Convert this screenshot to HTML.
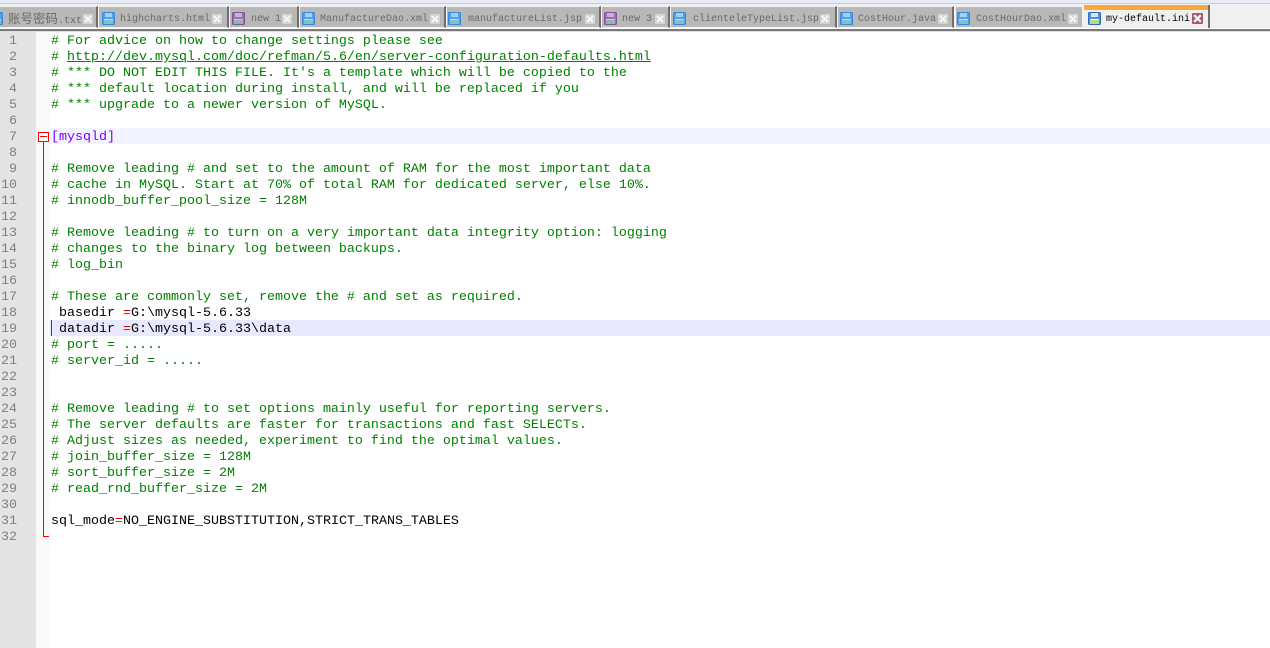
<!DOCTYPE html>
<html><head><meta charset="utf-8">
<style>
html,body{margin:0;padding:0;width:1270px;height:648px;overflow:hidden;background:#fff}
body{position:relative;font-family:"Liberation Mono","Noto Sans CJK SC",monospace}
.abs{position:absolute}
#bar{left:0;top:0;width:1270px;height:29px;background:#f0f0f0}
#bar:before{content:"";position:absolute;left:0;right:0;top:0;height:3px;background:#e8ecf6;border-bottom:1px solid #c4cce0}
#rule{left:0;top:28px;width:1270px;height:4px;background:linear-gradient(#fff 0,#fff 1px,#7a7a7a 1px,#7a7a7a 3px,#ddd 3px)}
.tab{position:absolute;top:6px;height:22px;background:#b8b8b8;border:1px solid #f4f4f4;border-right:2px solid #6e6e6e;box-sizing:border-box;color:#6a6a6a;font-size:10px;line-height:24px;white-space:pre;overflow:visible}
.tab span.t{position:absolute;top:1px;height:24px;line-height:24px}
.tab svg{position:absolute;top:5px;left:6px;width:13px;height:13px}
.x{position:absolute;top:7px;width:10px;height:10px;background:#d4d4d4;border-radius:1px}
.x svg{position:absolute!important;left:0!important;top:0!important;width:100%!important;height:100%!important}
.act{background:#f0f0f0;color:#000;top:5px;height:24px;border:0;border-right:2px solid #6e6e6e}
.act:before{content:"";position:absolute;left:0;right:0;top:0;height:5px;background:#fba73a}
#gut{left:0;top:32px;width:36px;height:616px;background:#e4e4e4}
#fold{left:36px;top:32px;width:14px;height:616px;background-color:#f3f3f3;background-image:linear-gradient(45deg,#fff 25%,transparent 25%,transparent 75%,#fff 75%),linear-gradient(45deg,#fff 25%,transparent 25%,transparent 75%,#fff 75%);background-size:2px 2px;background-position:0 0,1px 1px}
.n{position:absolute;left:0;width:17px;text-align:right;color:#808080;font-size:13.33px;line-height:16px;height:16px;margin-top:2px}
.l{position:absolute;left:51px;font-size:13.33px;line-height:16px;height:16px;white-space:pre;color:#000;margin-top:2px}
.c{color:#008000}
.h{color:#8000ff}
.e{color:#e00000}
.u{text-decoration:underline}
</style></head><body>
<div class="abs" id="bar"></div>

<svg width="0" height="0" style="position:absolute"><defs>
<g id="fb"><rect x="0.5" y="0.5" width="12" height="12" rx="1" fill="#4f9ff0" stroke="#3a86dc"/><rect x="3" y="1" width="7" height="4" fill="#a8cdf2"/><rect x="2" y="7" width="9" height="5" fill="#7fc4c4"/><rect x="2" y="7" width="9" height="1" fill="#c4dcf0"/></g>
<g id="fp"><rect x="0.5" y="0.5" width="12" height="12" rx="1" fill="#9a6fb0" stroke="#7f5498"/><rect x="3" y="1" width="7" height="4" fill="#c8b0d8"/><rect x="2" y="7" width="9" height="5" fill="#8fb8a8"/><rect x="2" y="7" width="9" height="1" fill="#d4c8e0"/></g>
<g id="fa"><rect x="0.5" y="0.5" width="12" height="12" rx="1" fill="#4d8fd8" stroke="#2f6cb8"/><rect x="3" y="1" width="7" height="4" fill="#d4e6f8"/><rect x="2" y="7" width="9" height="5" fill="#b4dc88"/><rect x="2" y="7" width="9" height="1" fill="#f0f6e4"/></g>
<path id="xx" d="M2 2L8 8M8 2L2 8" stroke="#f6f6f6" stroke-width="2" fill="none"/>
</defs></svg>

<div class="tab" style="left:-14px;width:112px">
<svg viewBox="0 0 13 13" style="left:3px"><use href="#fb"/></svg><span class="t" style="left:21px;font-size:12.5px">账号密码<span style="font-size:10px">.txt</span></span><div class="x" style="left:96px"><svg viewBox="0 0 10 10"><use href="#xx"/></svg></div></div>

<div class="tab" style="left:98px;width:131px"><svg viewBox="0 0 13 13" style="left:3px"><use href="#fb"/></svg><span class="t" style="left:21px">highcharts.html</span><div class="x" style="left:113px"><svg viewBox="0 0 10 10"><use href="#xx"/></svg></div></div>

<div class="tab" style="left:229px;width:70px"><svg viewBox="0 0 13 13" style="left:2px"><use href="#fp"/></svg><span class="t" style="left:21px">new 1</span><div class="x" style="left:52px"><svg viewBox="0 0 10 10"><use href="#xx"/></svg></div></div>

<div class="tab" style="left:299px;width:147px"><svg viewBox="0 0 13 13" style="left:2px"><use href="#fb"/></svg><span class="t" style="left:20px">ManufactureDao.xml</span><div class="x" style="left:130px"><svg viewBox="0 0 10 10"><use href="#xx"/></svg></div></div>

<div class="tab" style="left:446px;width:155px"><svg viewBox="0 0 13 13" style="left:1px"><use href="#fb"/></svg><span class="t" style="left:21px">manufactureList.jsp</span><div class="x" style="left:138px"><svg viewBox="0 0 10 10"><use href="#xx"/></svg></div></div>

<div class="tab" style="left:601px;width:69px"><svg viewBox="0 0 13 13" style="left:2px"><use href="#fp"/></svg><span class="t" style="left:20px">new 3</span><div class="x" style="left:53px"><svg viewBox="0 0 10 10"><use href="#xx"/></svg></div></div>

<div class="tab" style="left:670px;width:167px"><svg viewBox="0 0 13 13" style="left:2px"><use href="#fb"/></svg><span class="t" style="left:22px">clienteleTypeList.jsp</span><div class="x" style="left:149px"><svg viewBox="0 0 10 10"><use href="#xx"/></svg></div></div>

<div class="tab" style="left:837px;width:117px"><svg viewBox="0 0 13 13" style="left:2px"><use href="#fb"/></svg><span class="t" style="left:20px">CostHour.java</span><div class="x" style="left:100px"><svg viewBox="0 0 10 10"><use href="#xx"/></svg></div></div>

<div class="tab" style="left:955px;width:128px;border-right:1px solid #f4f4f4"><svg viewBox="0 0 13 13" style="left:1px"><use href="#fb"/></svg><span class="t" style="left:20px">CostHourDao.xml</span><div class="x" style="left:112px"><svg viewBox="0 0 10 10"><use href="#xx"/></svg></div></div>

<div class="tab act" style="left:1084px;width:126px"><svg viewBox="0 0 13 13" style="left:4px;top:7px"><use href="#fa"/></svg><span class="t" style="left:22px;top:3px">my-default.ini</span><div class="x" style="left:108px;top:8px;width:11px;height:11px;background:#a85a70"><svg viewBox="0 0 10 10"><use href="#xx"/></svg></div></div>

<div class="abs" id="rule"></div>
<div class="abs" id="gut"></div>
<div class="abs" id="fold"></div>

<div class="abs" style="left:50px;top:128px;width:1220px;height:16px;background:#f2f4ff"></div>
<div class="abs" style="left:50px;top:320px;width:1220px;height:16px;background:#e8e8ff"></div>
<div class="abs" style="left:51px;top:320px;width:1px;height:16px;background:#6020c0"></div>

<div class="abs" style="left:43px;top:141px;width:1px;height:396px;background:#ff0000"></div>
<div class="abs" style="left:43px;top:536px;width:6px;height:1px;background:#ff0000"></div>
<div class="abs" style="left:38px;top:132px;width:11px;height:10px;box-sizing:border-box;border:1px solid #ff0000;background:#fff"></div>
<div class="abs" style="left:40px;top:136px;width:7px;height:1px;background:#ff0000"></div>

<div class="n" style="top:32px">1</div><div class="n" style="top:48px">2</div><div class="n" style="top:64px">3</div><div class="n" style="top:80px">4</div><div class="n" style="top:96px">5</div><div class="n" style="top:112px">6</div><div class="n" style="top:128px">7</div><div class="n" style="top:144px">8</div><div class="n" style="top:160px">9</div><div class="n" style="top:176px">10</div><div class="n" style="top:192px">11</div><div class="n" style="top:208px">12</div><div class="n" style="top:224px">13</div><div class="n" style="top:240px">14</div><div class="n" style="top:256px">15</div><div class="n" style="top:272px">16</div><div class="n" style="top:288px">17</div><div class="n" style="top:304px">18</div><div class="n" style="top:320px">19</div><div class="n" style="top:336px">20</div><div class="n" style="top:352px">21</div><div class="n" style="top:368px">22</div><div class="n" style="top:384px">23</div><div class="n" style="top:400px">24</div><div class="n" style="top:416px">25</div><div class="n" style="top:432px">26</div><div class="n" style="top:448px">27</div><div class="n" style="top:464px">28</div><div class="n" style="top:480px">29</div><div class="n" style="top:496px">30</div><div class="n" style="top:512px">31</div><div class="n" style="top:528px">32</div>

<div class="l c" style="top:32px"># For advice on how to change settings please see</div>
<div class="l c" style="top:48px"># <span class="u">http://dev.mysql.com/doc/refman/5.6/en/server-configuration-defaults.html</span></div>
<div class="l c" style="top:64px"># *** DO NOT EDIT THIS FILE. It's a template which will be copied to the</div>
<div class="l c" style="top:80px"># *** default location during install, and will be replaced if you</div>
<div class="l c" style="top:96px"># *** upgrade to a newer version of MySQL.</div>
<div class="l h" style="top:128px">[mysqld]</div>
<div class="l c" style="top:160px"># Remove leading # and set to the amount of RAM for the most important data</div>
<div class="l c" style="top:176px"># cache in MySQL. Start at 70% of total RAM for dedicated server, else 10%.</div>
<div class="l c" style="top:192px"># innodb_buffer_pool_size = 128M</div>
<div class="l c" style="top:224px"># Remove leading # to turn on a very important data integrity option: logging</div>
<div class="l c" style="top:240px"># changes to the binary log between backups.</div>
<div class="l c" style="top:256px"># log_bin</div>
<div class="l c" style="top:288px"># These are commonly set, remove the # and set as required.</div>
<div class="l" style="top:304px"> basedir <span class="e">=</span>G:\mysql-5.6.33</div>
<div class="l" style="top:320px"> datadir <span class="e">=</span>G:\mysql-5.6.33\data</div>
<div class="l c" style="top:336px"># port = .....</div>
<div class="l c" style="top:352px"># server_id = .....</div>
<div class="l c" style="top:400px"># Remove leading # to set options mainly useful for reporting servers.</div>
<div class="l c" style="top:416px"># The server defaults are faster for transactions and fast SELECTs.</div>
<div class="l c" style="top:432px"># Adjust sizes as needed, experiment to find the optimal values.</div>
<div class="l c" style="top:448px"># join_buffer_size = 128M</div>
<div class="l c" style="top:464px"># sort_buffer_size = 2M</div>
<div class="l c" style="top:480px"># read_rnd_buffer_size = 2M</div>
<div class="l" style="top:512px">sql_mode<span class="e">=</span>NO_ENGINE_SUBSTITUTION,STRICT_TRANS_TABLES</div>
</body></html>
